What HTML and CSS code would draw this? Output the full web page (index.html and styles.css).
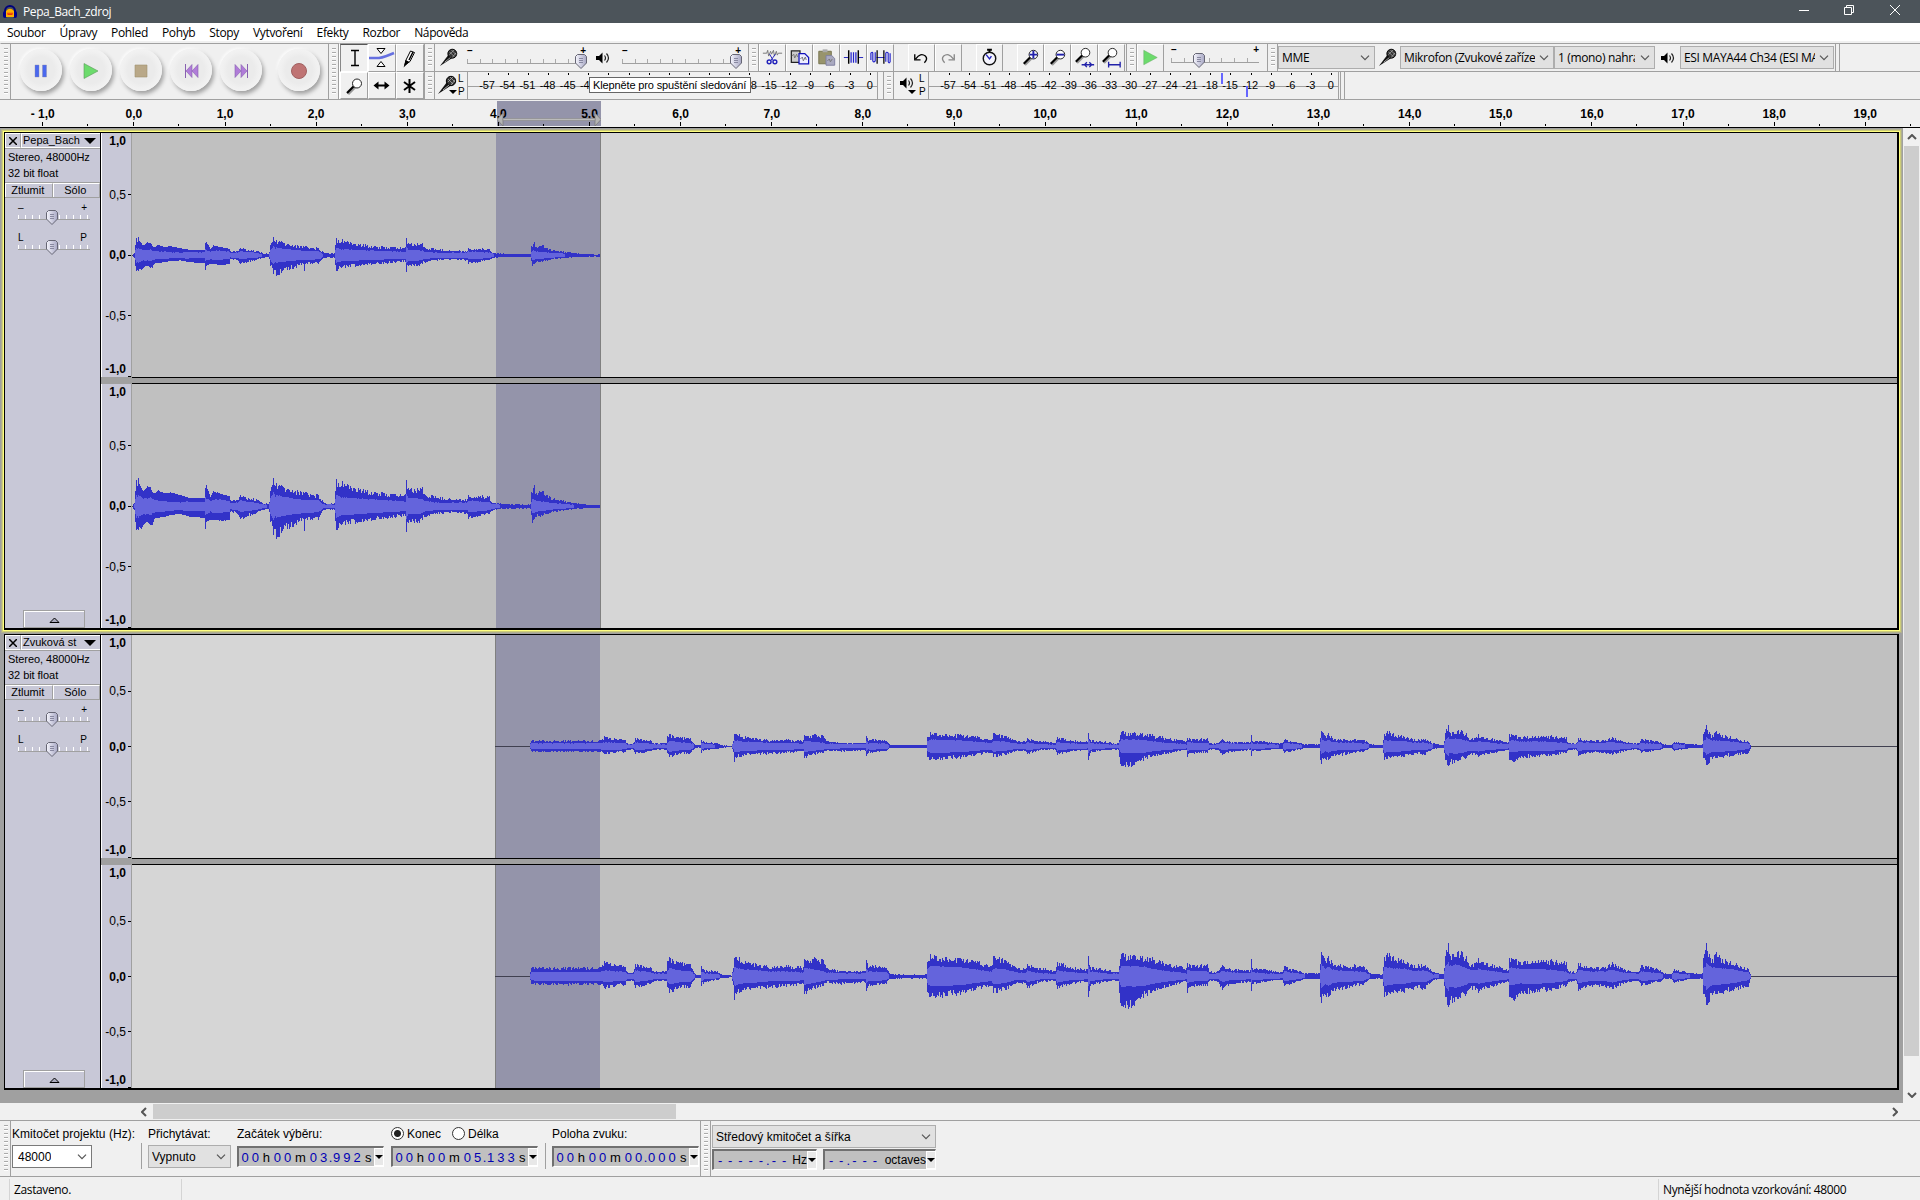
FILE: index.html
```html
<!DOCTYPE html>
<html lang="cs">
<head>
  <meta charset="UTF-8">
  <title>Pepa_Bach_zdroj</title>
  <link rel="stylesheet" href="styles.css">
</head>
<body>
  <svg class="defs" width="0" height="0">
    <defs>
      <linearGradient id="thumbFill" x1="0" x2="1">
        <stop offset="0" stop-color="#f4f4fc"/><stop offset="1" stop-color="#a8a8c4"/>
      </linearGradient>
      <symbol id="thumb" viewBox="0 0 12 15">
        <path d="M2.5 .5h7l2 2v6.500l-5.500 5.500L.5 9V2.500z" fill="url(#thumbFill)" stroke="#666674"/>
        <path d="M4 4.500h4M4 6.500h4M4 8.500h4" stroke="#8888a0"/>
      </symbol>
      <symbol id="mic" viewBox="0 0 20 20">
        <path d="M1 19L10 7l4 3.500z" fill="#111"/>
        <circle cx="14" cy="6" r="4.700" fill="#333" stroke="#000"/>
        <path d="M11 4l5 5M13 2l5 5M16 2l-5 5M18 5l-4 5" stroke="#bbb" stroke-width=".7"/>
        <path d="M6 15l6-5" stroke="#aaa"/>
      </symbol>
      <symbol id="speaker" viewBox="0 0 14 14">
        <path d="M0 5h3l3.500-3.500v11L3 9H0z" fill="#000"/>
        <path d="M8.500 4.500q2 2.500 0 5M10.500 2.500q4 4.500 0 9" fill="none" stroke="#222" stroke-width="1.200"/>
      </symbol>
      <symbol id="lens" viewBox="0 0 20 20">
        <path d="M3 17l7-7" stroke="#999" stroke-width="3"/>
        <path d="M2 16l7-7" stroke="#000" stroke-width="2.200"/>
        <circle cx="12" cy="6.500" r="4.500" fill="#fff" stroke="#222"/>
      </symbol>
      <symbol id="chev" viewBox="0 0 10 6"><path d="M1 .7l4 4 4-4" fill="none" stroke="#555" stroke-width="1.200"/></symbol>
    </defs>
  </svg>

  <header class="titlebar">
    <svg class="app-icon" viewBox="0 0 14 14">
      <path d="M2 9V6a5 5 0 0 1 10 0v3" fill="none" stroke="#00007c" stroke-width="2"/>
      <rect x="0" y="6" width="4" height="7" rx="2" fill="#00008c"/><rect x="10" y="6" width="4" height="7" rx="2" fill="#00008c"/>
      <path d="M3 12V6q4-4.500 8 0v6z" fill="#ffb000"/><path d="M4 9l1-2 1 2 1-2 1 2 1-2 1 2-1 1H5z" fill="#f03010"/>
    </svg>
    <span class="title">Pepa_Bach_zdroj</span>
    <svg class="win-buttons" viewBox="0 0 110 12" fill="none" stroke="#fff">
      <path d="M1 6.500h10M46.500 3.500h7v7h-7zM48.500 3.500v-2h7v7h-2M92 1l10 10M102 1L92 11"/>
    </svg>
  </header>

  <nav class="menu">
    <span>Soubor</span><span>Úpravy</span><span>Pohled</span><span>Pohyb</span><span>Stopy</span><span>Vytvoření</span><span>Efekty</span><span>Rozbor</span><span>Nápověda</span>
  </nav>

  <section class="toolbars">
    <div class="grip tall"></div>
    <div class="transport">
      <div class="round"><svg viewBox="0 0 16 16"><path d="M2 2h4v12H2zM9.500 2h4v12h-4z" fill="#4a68ee" stroke="#88a" stroke-width=".4"/></svg></div>
      <div class="round"><svg viewBox="0 0 16 16"><path d="M1 .5l14 7.500-14 7.500z" fill="#6cdb6c" stroke="#5a9a5a" stroke-width=".6"/></svg></div>
      <div class="round"><svg viewBox="0 0 16 16"><path d="M2 2h12v12H2z" fill="#b9a888" stroke="#a09070" stroke-width=".6"/></svg></div>
      <div class="round"><svg viewBox="0 0 16 16"><path d="M2.500 1v14" stroke="#8860b0"/><path d="M9 1.500v13L3 8zM15 1.500v13L9 8z" fill="#b07cd8" stroke="#8860b0" stroke-width=".6"/></svg></div>
      <div class="round"><svg viewBox="0 0 16 16"><path d="M14.500 1v14" stroke="#8860b0"/><path d="M8 1.500v13L14 8zM2 1.500v13L8 8z" fill="#b07cd8" stroke="#8860b0" stroke-width=".6"/></svg></div>
      <div class="round rec"><svg viewBox="0 0 16 16"><circle cx="8" cy="8" r="7.500" fill="#bf7474" stroke="#a06060"/></svg></div>
    </div>
    <div class="grip tall"></div>
    <div class="tools">
      <div class="tool down"><svg viewBox="0 0 26 26"><path d="M10 5.500h8M10 20.500h8M14 5v15" stroke="#000" stroke-width="1.400"/></svg></div>
      <div class="tool"><svg viewBox="0 0 26 26"><path d="M0 13h10q6-1 15-5" fill="none" stroke="#6670e0" stroke-width="2.500"/><path d="M8 3.500h8l-4 5zM8 21.500h8l-4-5z" fill="#fff" stroke="#000"/></svg></div>
      <div class="tool"><svg viewBox="0 0 26 26"><path d="M8 20l1-5 4.500-9 4 1.500-4.500 9z" fill="#fff" stroke="#000"/><path d="M8 20l1-4 2 1zM12 15l4-8" stroke="#000" stroke-width="1.500"/></svg></div>
      <div class="tool"><svg class="lens-big"><use href="#lens"/></svg></div>
      <div class="tool"><svg viewBox="0 0 26 26"><path d="M6 12.500h13" stroke="#000" stroke-width="2"/><path d="M4.500 12.500l5-4v8zM20.500 12.500l-5-4v8z"/></svg></div>
      <div class="tool"><svg viewBox="0 0 26 26"><path d="M12.500 6v14M7 9l11 8M18 9L7 17" stroke="#000" stroke-width="2"/></svg></div>
    </div>

    <div class="rows">
      <div class="row">
        <div class="grip"></div>
        <div class="mixer">
          <svg class="mic"><use href="#mic"/></svg>
          <div class="slider wide"><i>–</i><i>+</i><svg class="thumb"><use href="#thumb"/></svg></div>
          <svg class="speaker"><use href="#speaker"/></svg>
          <div class="slider wide"><i>–</i><i>+</i><svg class="thumb"><use href="#thumb"/></svg></div>
        </div>
        <div class="grip"></div>
        <div class="btns">
          <div class="btn"><svg viewBox="0 0 26 26"><path d="M3 8h4l1-3 1 6 2-5 1 3 2-4 1 6 2-5 1 4 1-2h4" fill="none" stroke="#777"/><path d="M16 9l-5 7M10 9l4 7" stroke="#22b"/><circle cx="9.500" cy="17" r="2" fill="none" stroke="#22b" stroke-width="1.500"/><circle cx="15.500" cy="17" r="2" fill="none" stroke="#22b" stroke-width="1.500"/></svg></div>
          <div class="btn"><svg viewBox="0 0 26 26"><path d="M4.500 5.500h9v12h-9z" fill="#ccc" stroke="#222" stroke-width="1.300"/><path d="M5 11l2-2 1 4 2-4 1 3" fill="none" stroke="#777"/><path d="M12.500 8.500h6l4 4v6.500h-10z" fill="#eef" stroke="#11b" stroke-width="1.300"/><path d="M14 14l2-2 1 4 2-4 1 3" fill="none" stroke="#777"/></svg></div>
          <div class="btn"><svg viewBox="0 0 26 26"><path d="M5 6h13v13H5z" fill="#98946c" stroke="#77754f"/><path d="M9 4h5v3H9z" fill="#aaa"/><path d="M12.500 10.500h6l3 3v7h-9z" fill="#aaaac0" stroke="#8080a0"/><path d="M14 16l2-2 1 3 2-3" fill="none" stroke="#777"/></svg></div>
          <div class="btn"><svg viewBox="0 0 26 26"><path d="M3 12.500h5M18 12.500h5" stroke="#22b"/><path d="M10.500 18V7M13 18V7M15.500 18V7" stroke="#22c" stroke-width="1.300"/><path d="M8 5v14M18 5v14" stroke="#000" stroke-width="1.500"/></svg></div>
          <div class="btn"><svg viewBox="0 0 26 26"><path d="M9 12.500h8" stroke="#22b"/><path d="M3 15V8q2-2 2 0v8q1 2 2.500 0V7M18.500 17V8q1-2 2.500 0v9q1 2 2 0V8" fill="none" stroke="#22c" stroke-width="1.200"/><path d="M9.500 5v14M16.500 5v14" stroke="#000" stroke-width="1.300"/></svg></div>
          <div class="btn gap"><svg viewBox="0 0 26 26"><path d="M6 9v6h6M7 14q5-7 10-3 3 3-1 7" fill="none" stroke="#000" stroke-width="1.400"/></svg></div>
          <div class="btn"><svg viewBox="0 0 26 26"><path d="M19 9v6h-6M18 14q-5-7-10-3-3 3 1 7" fill="none" stroke="#888" stroke-width="1.400"/></svg></div>
          <div class="btn gap"><svg viewBox="0 0 26 26"><path d="M10.500 4.500h5M13 4.500v3" stroke="#000" stroke-width="2"/><circle cx="13" cy="13.500" r="6.500" fill="#f4f4fc" stroke="#111" stroke-width="1.500"/><path d="M9.500 9.500L13 14l2-3" fill="none" stroke="#22b" stroke-width="1.400"/></svg></div>
          <div class="btn gap"><svg viewBox="0 0 26 26"><use href="#lens" x="4" y="3" width="20" height="20"/><path d="M12 9.500h8M16 5.500v8" stroke="#22a" stroke-width="2"/></svg></div>
          <div class="btn"><svg viewBox="0 0 26 26"><use href="#lens" x="4" y="3" width="20" height="20"/><path d="M12 9.500h8" stroke="#22a" stroke-width="2"/></svg></div>
          <div class="btn"><svg viewBox="0 0 26 26"><use href="#lens" x="2" y="1" width="20" height="20"/><path d="M10 20h13M15.500 17.500l-2.500 2.500 2.500 2.500M18 17.500l2.500 2.500-2.500 2.500" fill="none" stroke="#22a" stroke-width="1.400"/></svg></div>
          <div class="btn"><svg viewBox="0 0 26 26"><use href="#lens" x="2" y="1" width="20" height="20"/><path d="M10 20h12M10 17v6M22 17v6" fill="none" stroke="#22a" stroke-width="1.400"/></svg></div>
        </div>
        <div class="grip"></div>
        <div class="btn playspeed"><svg viewBox="0 0 26 26"><path d="M6 5l14 7.500L6 20z" fill="#6cdb6c" stroke="#6a6" stroke-width=".5"/></svg></div>
        <div class="slider speed"><i>–</i><i>+</i><svg class="thumb"><use href="#thumb"/></svg></div>
        <div class="grip"></div>
        <div class="devices">
          <div class="combo host"><span>MME</span><svg><use href="#chev"/></svg></div>
          <svg class="mic"><use href="#mic"/></svg>
          <div class="combo"><span>Mikrofon (Zvukové zařízení)</span><svg><use href="#chev"/></svg></div>
          <div class="combo chan"><span>1 (mono) nahrávací</span><svg><use href="#chev"/></svg></div>
          <svg class="speaker"><use href="#speaker"/></svg>
          <div class="combo"><span>ESI MAYA44 Ch34 (ESI MAYA)</span><svg><use href="#chev"/></svg></div>
        </div>
      </div>
      <div class="row">
        <div class="grip"></div>
        <div class="meterbar">
          <svg class="mic"><use href="#mic"/></svg><b class="drop"></b>
          <div class="lp"><span>L</span><span>P</span></div>
          <div class="meter"></div>
          <div class="tooltip">Klepněte pro spuštění sledování</div>
        </div>
        <div class="grip"></div>
        <div class="meterbar play">
          <svg class="speaker"><use href="#speaker"/></svg><b class="drop"></b>
          <div class="lp"><span>L</span><span>P</span></div>
          <div class="meter"></div>
          <b class="peak left"></b><b class="peak right"></b>
        </div>
      </div>
    </div>
  </section>

  <section class="timeline">
    <div class="range"></div>
    <div class="ticks" id="ticks"></div>
    <svg class="handles" viewBox="0 0 104 13"><path d="M0 6.500L6 0v13zM104 6.500L98 0v13z" fill="#b4b4b4" stroke="#777" stroke-width=".7"/><path d="M6 5.500h92v2H6z" fill="#bbb" stroke="#888" stroke-width=".6"/></svg>
  </section>

  <main class="workspace">
    <div class="tracks">
      <article class="track focused" data-name="Pepa_Bach" data-wave="source"></article>
      <article class="track second" data-name="Zvuková st" data-wave="target"></article>
    </div>
    <div class="vscroll"><svg viewBox="0 0 10 6"><path d="M1 5l4-4 4 4" fill="none" stroke="#555" stroke-width="2"/></svg><div class="bar"></div><svg viewBox="0 0 10 6"><path d="M1 1l4 4 4-4" fill="none" stroke="#555" stroke-width="2"/></svg></div>
  </main>

  <div class="hscroll"><svg viewBox="0 0 6 10"><path d="M5 1L1 5l4 4" fill="none" stroke="#555" stroke-width="2"/></svg><div class="bar"></div><svg viewBox="0 0 6 10"><path d="M1 1l4 4-4 4" fill="none" stroke="#555" stroke-width="2"/></svg></div>

  <section class="selection">
    <div class="grip tall"></div>
    <div class="field rate"><label>Kmitočet projektu (Hz):</label><div class="combo white"><span>48000</span><svg><use href="#chev"/></svg></div></div>
    <div class="rule"></div>
    <div class="field snap"><label>Přichytávat:</label><div class="combo"><span>Vypnuto</span><svg><use href="#chev"/></svg></div></div>
    <div class="field start"><label>Začátek výběru:</label><div class="time" data-time="00h00m03.992s"></div></div>
    <div class="field end"><div class="radios"><i class="radio on"></i>Konec<i class="radio"></i>Délka</div><div class="time" data-time="00h00m05.133s"></div></div>
    <div class="rule"></div>
    <div class="field pos"><label>Poloha zvuku:</label><div class="time" data-time="00h00m00.000s"></div></div>
    <div class="grip tall"></div>
    <div class="spectral">
      <div class="combo"><span>Středový kmitočet a šířka</span><svg><use href="#chev"/></svg></div>
      <div class="pair">
        <div class="time hz" data-time="-----.--" data-unit="Hz"></div>
        <div class="time oct" data-time="--.---" data-unit="octaves"></div>
      </div>
    </div>
  </section>

  <footer class="status"><span>Zastaveno.</span><span></span><span>Nynější hodnota vzorkování: 48000</span></footer>
  <script src="script.js"></script>
</body>
</html>
```
FILE: styles.css
```css
* { box-sizing: border-box; }

body {
  margin: 0;
  width: 1920px;
  height: 1200px;
  overflow: hidden;
  background: #f0f0f0;
  color: #000;
  font: 12px "Liberation Sans", Arial, sans-serif;
  display: flex;
  flex-direction: column;
}

svg { display: block; flex: none; }
.defs { position: absolute; }
i { font-style: normal; }

/* title + menu */
.titlebar {
  height: 23px;
  flex: none;
  background: #4c545a;
  color: #fff;
  display: flex;
  align-items: center;
  padding-left: 3px;
  font-family: "Open Sans", sans-serif;
}
.app-icon { width: 14px; height: 14px; }
.title { margin-left: 6px; letter-spacing: -0.4px; }
.win-buttons { width: 110px; height: 12px; margin: 0 12px 3px auto; }

.menu {
  height: 18px;
  flex: none;
  background: #fff;
  display: flex;
  gap: 14px;
  padding: 1px 0 0 7px;
  line-height: 18px;
  font-family: "Open Sans", sans-serif;
  letter-spacing: -0.35px;
}

/* toolbars */
.toolbars {
  height: 59px;
  flex: none;
  padding-top: 2px;
  display: flex;
  border-bottom: 1px solid #a0a0a0;
}
.toolbars > * { border-top: 1px solid #a0a0a0; }

.grip {
  width: 11px;
  flex: none;
  border-right: 1px solid #a0a0a0;
  border-left: 1px solid #a0a0a0;
  background: repeating-linear-gradient(#aaa 0 1px, #fff 1px 2px, #f0f0f0 2px 4px) 3px 4px / 4px calc(100% - 7px) no-repeat #f0f0f0;
}
.toolbars > .grip:first-child,
.selection > .grip:first-child { border-left-color: #f0f0f0; }

.transport { width: 317px; display: flex; padding: 5px 0 0 9px; gap: 8px; }
.round {
  width: 42px;
  height: 42px;
  flex: none;
  border-radius: 50%;
  background: radial-gradient(#ebebeb 45%, #f0f0f0 60%, #f8f8f8);
  box-shadow: 2px 3px 4px #a0a0a0, -1px -1px 3px #fff;
  display: flex;
  align-items: center;
  justify-content: center;
}
.round svg { width: 16px; height: 16px; margin-top: 1px; }
.round.rec { margin-left: 8px; }

.tools {
  width: 85px;
  display: grid;
  grid-template-columns: repeat(3, 28px);
  grid-template-rows: 28px 27px;
  border-left: 1px solid #fff;
}
.tool {
  border: 1px solid #fff;
  border-right-color: #a0a0a0;
  border-bottom-color: #a0a0a0;
}
.tool svg { width: 26px; height: 26px; }
.tool .lens-big { width: 20px; height: 20px; margin: 4px; }
.tool.down { border-color: #555 #fff #fff #888; }

.rows { flex: 1; display: flex; flex-direction: column; }
.row { height: 28px; display: flex; border-bottom: 1px solid #a0a0a0; }
.row + .row { height: 27px; border: 0; }

.mixer { width: 313px; display: flex; padding-left: 4px; align-items: center; }
.mic { width: 19px; height: 19px; }
.speaker { width: 14px; height: 14px; }

.slider {
  position: relative;
  height: 24px;
  width: 115px;
  margin-left: 9px;
  display: flex;
  justify-content: space-between;
  font-size: 10px;
  line-height: 10px;
  font-weight: bold;
  background:
    linear-gradient(#a0a0a0, #a0a0a0) 0 17px / 100% 1px no-repeat,
    repeating-linear-gradient(90deg, #aaa 0 1px, transparent 1px 12.6px) 0 13px / 100% 4px no-repeat;
}
.mixer .slider { width: 119px; }
.mixer .speaker { margin: 0 0 0 10px; }
.mixer .slider:last-child { margin-left: 12px; }
.thumb { position: absolute; width: 12px; height: 15px; top: 8px; right: -1px; }
.slider.speed { width: 88px; margin: 1px 8px 0 7px; }
.slider.speed .thumb { right: 54px; }

.btns { width: 367px; display: flex; }
.btn {
  width: 27px;
  height: 27px;
  flex: none;
  border-left: 1px solid #fff;
  border-top: 1px solid #fff;
  border-right: 1px solid #a0a0a0;
}
.btn svg { width: 25px; height: 26px; }
.btn.gap { margin-left: 14px; }

.devices {
  width: 558px;
  display: flex;
  align-items: center;
  border-right: 1px solid #a0a0a0;
  box-shadow: 3px 0 0 #f0f0f0, 4px 0 0 #a0a0a0;
}
.devices .mic { margin: 0 3px 0 3px; }
.devices .speaker { margin: 0 5px 0 6px; }

.combo {
  width: 154px;
  height: 23px;
  flex: none;
  background: #e1e1e1;
  border: 1px solid #adadad;
  display: flex;
  align-items: center;
  justify-content: space-between;
  padding: 0 4px 0 3px;
  font-family: "Open Sans", sans-serif;
  letter-spacing: -0.35px;
}
.combo span { width: 131px; overflow: hidden; white-space: nowrap; }
.combo svg { width: 10px; height: 6px; }
.combo.host { width: 97px; }
.combo.host span, .combo.chan span { width: 77px; }
.combo.chan { width: 101px; }
.combo.white { background: #fff; border-color: #7a7a7a; }

/* level meters */
.meterbar { position: relative; width: 448px; display: flex; padding-left: 2px; }
.meterbar .mic { margin-top: 3px; width: 20px; height: 20px; }
.drop {
  position: absolute;
  left: 14px;
  top: 18px;
  border: 4px solid transparent;
  border-top-color: #000;
  border-bottom: 0;
}
.lp { width: 9px; margin-left: 1px; font-size: 10px; line-height: 13px; display: flex; flex-direction: column; }
.meter {
  height: 27px;
  width: 411px;
  border-left: 1px solid #a0a0a0;
  border-right: 1px solid #a0a0a0;
  display: flex;
  padding-left: 9px;
  line-height: 27px;
  font-size: 11px;
  background: linear-gradient(#a0a0a0, #a0a0a0) 0 14px / 100% 1px no-repeat;
}
.meter span {
  flex: 0 0 20.15px;
  display: flex;
  justify-content: center;
  letter-spacing: -0.1px;
  background: linear-gradient(#000, #000) 55% 1px / 1px 2px no-repeat;
}
.meterbar.play { padding-left: 5px; width: 447px; border-right: 1px solid #a0a0a0; box-shadow: 3px 0 0 #f0f0f0, 4px 0 0 #a0a0a0; }
.play .speaker { margin: 4px 0 0 1px; }
.play .lp { margin-left: 5px; }
.play .drop { left: 14px; }
.tooltip {
  position: absolute;
  left: 154px;
  top: 5px;
  width: 162px;
  height: 16px;
  background: #fff;
  border: 1px solid #666;
  font-size: 11px;
  line-height: 14px;
  padding-left: 3px;
  letter-spacing: -0.13px;
  white-space: nowrap;
}
.peak { position: absolute; width: 2px; height: 11px; background: #6666ff; top: 1px; left: 327px; }
.peak.right { top: 14px; left: 352px; }

/* time ruler */
.timeline {
  position: relative;
  height: 28px;
  flex: none;
  border-bottom: 1px solid #000;
  overflow: hidden;
}
.range { position: absolute; left: 497px; top: 1px; width: 104px; height: 25px; background: #9494aa; }
.handles { position: absolute; left: 497px; top: 13px; width: 104px; height: 13px; }
.ticks { position: relative; display: flex; margin-left: -2.8px; height: 26px; }
.ticks span {
  flex: 0 0 91.14px;
  text-align: center;
  font: bold 12px/29px "Liberation Sans", sans-serif;
  background:
    linear-gradient(#000, #000) 50% 100% / 1px 4px no-repeat,
    linear-gradient(#000, #000) 100% 100% / 1px 2px no-repeat;
}

/* tracks */
.workspace { height: 975px; flex: none; display: flex; background: #a0a0a0; }
.tracks { width: 1903px; padding: 4px 0 0 4px; }
.track {
  width: 1895px;
  height: 498px;
  border: 1px solid #000;
  border-right-width: 2px;
  border-bottom-width: 2px;
  display: flex;
}
.track.focused { box-shadow: 0 0 0 1px #ffff80, 0 0 0 2px #cccc78, 0 0 0 3px #b0b090; }
.track.second { height: 456px; margin-top: 4px; }

.panel {
  width: 96px;
  flex: none;
  background: #c8c8d7;
  border-right: 1px solid #000;
  display: flex;
  flex-direction: column;
  font-size: 11px;
}
.panel .head { display: flex; height: 16px; border-bottom: 1px solid #a0a0a0; }
.head .close {
  width: 16px;
  display: flex;
  align-items: center;
  justify-content: center;
  border: 1px solid #fff;
  border-right-color: #a0a0a0;
}
.close svg { width: 8px; height: 8px; }
.head .name {
  flex: 1;
  border: 1px solid #fff;
  border-right: 0;
  line-height: 12px;
  padding-left: 1px;
  display: flex;
  justify-content: space-between;
}
.name b { border: 6px solid transparent; border-top-color: #000; border-bottom: 0; margin: 4px 4px 0 0; }
.panel .info { height: 33px; padding-left: 3px; line-height: 16px; letter-spacing: -0.05px; }
.mutes { display: flex; height: 16px; border-bottom: 1px solid #a0a0a0; border-top: 1px solid #a0a0a0; }
.mutes span { flex: 1; text-align: center; line-height: 13px; border: 1px solid #fff; border-right-color: #a0a0a0; border-bottom: 0; padding-right: 2px; }
.panel .slider {
  width: 72px;
  height: 20px;
  margin: 5px 0 3px 13px;
  padding: 0 3px 0 0;
  font-weight: normal;
  background:
    linear-gradient(#a0a0a0, #a0a0a0) 0 16px / 100% 1px no-repeat,
    repeating-linear-gradient(90deg, #fff 0 1px, transparent 1px 6.9px) 0 12px / 100% 4px no-repeat;
}
.panel .slider + .slider { margin-top: 7px; }
.panel .thumb { top: 7px; left: 28px; }
.collapse {
  width: 62px;
  height: 18px;
  margin: auto 0 0 18px;
  border: 1px solid #a0a0a0;
  box-shadow: inset 1px 1px 0 #fff;
  padding: 6px 0 0 25px;
}
.collapse svg { width: 11px; height: 7px; }

.channels { flex: 1; display: flex; flex-direction: column; justify-content: space-between; }
.channel { display: flex; height: 244px; }
.second .channel { height: 223px; }
.vruler {
  width: 31px;
  background: #c8c8d7;
  border-left: 1px solid #fff;
  border-right: 1px solid #a0a0a0;
  display: flex;
  flex-direction: column;
}
.vruler span {
  flex: 1;
  display: flex;
  align-items: center;
  justify-content: flex-end;
  padding-right: 5px;
  background: linear-gradient(#000, #000) 100% 50% / 3px 1px no-repeat;
}
.vruler span:nth-child(odd) { flex: 0 0 14px; font-weight: bold; }
.vruler span:first-child { background: none; padding-top: 1px; }
.vruler span:last-child { background-position: 100% 100%; padding-bottom: 1px; }
.vruler span:nth-child(3) { flex-basis: 28px; }
.divider { flex: 1; margin-left: 31px; border-top: 1px solid #000; border-bottom: 1px solid #000; background: #a0a0a0; }
canvas { display: block; }

/* scrollbars */
.vscroll {
  width: 17px;
  display: flex;
  flex-direction: column;
  align-items: center;
  background: #f0f0f0;
  padding: 6px 0 5px;
}
.vscroll svg { width: 10px; height: 6px; }
.vscroll .bar { width: 15px; height: 910px; margin: 6px 0 auto; background: #cdcdcd; }
.hscroll { height: 17px; flex: none; display: flex; align-items: center; padding: 0 22px 0 141px; }
.hscroll svg { width: 6px; height: 10px; }
.hscroll .bar { width: 523px; height: 15px; margin: 0 auto 0 6px; background: #cdcdcd; }

/* selection bar */
.selection {
  height: 57px;
  flex: none;
  border-top: 1px solid #a0a0a0;
  border-bottom: 1px solid #a0a0a0;
  display: flex;
}
.field { display: flex; flex-direction: column; }
.field label, .radios { height: 24px; line-height: 26px; white-space: nowrap; }
.field .combo, .spectral .combo { font-family: inherit; letter-spacing: 0; }
.field.rate { width: 130px; padding-left: 1px; letter-spacing: 0.05px; }
.rate .combo { width: 80px; padding-left: 5px; }
.combo.white span, .snap .combo span, .spectral .combo span { width: auto; }
.snap .combo { width: 83px; }
.rule { width: 1px; height: 26px; margin-top: 22px; background: #a0a0a0; }
.field.snap { width: 95px; padding-left: 6px; }
.field.start { width: 154px; }
.field.end { width: 154px; }
.field.pos { width: 154px; padding-left: 6px; }
.radios { display: flex; align-items: center; padding-top: 1px; }
.radio {
  width: 13px;
  height: 13px;
  border: 1px solid #333;
  border-radius: 50%;
  background: #fff;
  margin-right: 3px;
}
.radio.on { background: radial-gradient(#222 0 3px, #fff 4px); }
.radio:not(.on) { margin-left: 11px; }

.time {
  width: 147px;
  height: 21px;
  margin-top: 1px;
  background: #c0c0c0;
  border: 2px solid #707070;
  border-right: 1px solid #fff;
  border-bottom: 1px solid #fff;
  display: flex;
  align-items: center;
  padding-left: 1px;
}
.time span { width: 10.2px; text-align: center; color: #0000b4; flex: none; font-size: 13px; }
.time .h, .time .s { width: 12px; color: #000; }
.time .m { width: 15.5px; color: #000; }
.time .dot { width: 3px; }
.time em { font-style: normal; margin-left: auto; }
.time b {
  width: 9px;
  height: 18px;
  flex: none;
  margin-left: auto;
  background: #e8e8e8;
  border: 1px solid #fff;
  border-right: 0;
  display: flex;
  align-items: center;
  justify-content: center;
}
.time em + b { margin-left: 0; }
.time b::after { content: ""; border: 4px solid transparent; border-top: 4px solid #000; border-bottom: 0; }

.spectral { padding: 4px 0 0 1px; }
.spectral .combo { width: 224px; }
.pair { display: flex; gap: 6px; margin-top: 1px; }
.time.hz { width: 105px; margin-top: 0; }
.time.oct { width: 113px; margin-top: 0; }

/* status bar */
.status {
  flex: 1;
  display: flex;
  padding: 2px 0 0 9px;
  border-bottom: 2px solid #3c4246;
  font-family: "Open Sans", sans-serif;
  letter-spacing: -0.37px;
}
.status span { border-left: 1px solid #d4d4d4; padding-left: 4px; line-height: 21px; }
.status span:first-child { width: 172px; }
.status span:nth-child(2) { width: 1477px; }
```
FILE: script.js
```js
const SEL = [496, 600];
const LEFT = 132; // page x of the first waveform column

// envelope points: x, peak above, peak below
const waves = {
  source: {
    clip: [132, 601],
    points: [
      [132, .5, .5], [134, 3, 3], [135, 15, 15], [136, 26, 23], [137, 20, 22], [138, 28, 23], [139, 22, 20], [141, 18, 22], [143, 15, 18],
      [147, 20, 15], [150, 19, 18], [152, 14, 18], [154, 13, 12], [158, 16, 11], [164, 13, 10], [170, 14, 8], [180, 11, 7], [190, 8, 10],
      [204, 8, 11], [205, 18, 22], [206, 21, 15], [208, 15, 14], [210, 9, 13], [213, 15, 13], [222, 12, 14], [229, 10, 13], [230, 6, 5],
      [237, 6, 7], [240, 11, 12], [248, 8, 9], [256, 7, 6], [262, 3, 3], [268, 2, 2], [269, 4, 5], [270, 15, 15], [273, 28, 28],
      [275, 20, 22], [276, 23, 32], [282, 20, 24], [292, 16, 20], [303, 14, 12], [304, 13, 24], [305, 14, 12], [318, 11, 13], [322, 6, 4],
      [324, 3, 2.500], [334, 3, 2.500], [335, 15, 14], [336, 27, 23], [342, 25, 17], [350, 20, 17], [360, 17, 15], [375, 14, 13],
      [390, 12, 11], [405, 12, 9], [406, 26, 25], [408, 18, 16], [417, 18, 16], [422, 19, 13], [424, 12, 10], [435, 10, 7], [450, 7, 6],
      [467, 7, 7], [468, 11, 12], [480, 10, 9], [489, 10, 7], [491, 4, 4], [500, 2.500, 2], [522, 1.500, 1.500], [530, 1.500, 1.500],
      [531, 14, 8], [532, 13, 16], [534, 21, 12], [536, 13, 10], [542, 15, 9], [550, 9, 6], [560, 6, 4], [575, 3, 2], [590, 1, 1], [600, 1, 1]
    ]
  },
  target: {
    clip: [495, 1897],
    points: [
      [495, .5, .5], [529, .5, .5], [531, 8, 7], [535, 8.500, 8], [600, 9, 8], [604, 15, 11], [625, 9, 8], [627, 4, 4], [633, 4, 4],
      [635, 12, 11], [650, 9, 7], [653, 5, 5], [666, 5, 4], [667, 15, 10], [669, 19, 16], [672, 17, 15], [680, 14, 11], [690, 12, 10],
      [693, 5, 4], [696, 1, 1], [700, 1, 1], [701, 10, 9], [704, 6, 5], [717, 5, 3], [722, 1, 1], [731, .5, .5], [733, 8, 8], [734, 18, 23],
      [736, 19, 17], [745, 15, 13], [760, 11, 12], [772, 9, 11], [790, 10, 9], [803, 9, 7], [804, 17, 17], [815, 18, 12], [823, 16, 9],
      [826, 8, 6], [840, 5, 7], [865, 5, 6], [866, 16, 14], [868, 8, 9], [872, 11, 9], [886, 8, 7], [889, 3, 2], [895, 1.500, 1.500],
      [926, 1.500, 1.500], [927, 14, 15], [930, 22, 20], [935, 20, 21], [945, 19, 19], [960, 18, 18], [975, 15, 13], [991, 10, 9],
      [993, 20, 16], [1005, 16, 13], [1015, 9, 7], [1025, 7, 6], [1027, 12, 11], [1040, 8, 5], [1055, 5, 4], [1057, 14, 12], [1070, 9, 7],
      [1087, 7, 5], [1088, 20, 20], [1090, 9, 9], [1100, 8, 6], [1110, 6, 4], [1118, 4, 4], [1120, 17, 26], [1121, 22, 29], [1128, 20, 32],
      [1133, 21, 28], [1140, 20, 22], [1150, 18, 16], [1160, 15, 12], [1170, 12, 9], [1186, 8, 5], [1187, 13, 16], [1190, 11, 10],
      [1207, 12, 9], [1209, 4, 4], [1218, 5, 5], [1222, 11, 13], [1230, 7, 7], [1250, 6, 5], [1251, 17, 14], [1252, 8, 7], [1265, 7, 5],
      [1282, 4, 3], [1284, 10, 9], [1300, 5, 4], [1305, 2.500, 2], [1319, 3, 2], [1320, 12, 20], [1321, 24, 26], [1325, 15, 18],
      [1328, 20, 20], [1332, 13, 14], [1345, 10, 12], [1355, 11, 9], [1363, 10, 8], [1370, 3, 2], [1382, 1.500, 1.500], [1384, 19, 20],
      [1387, 23, 18], [1393, 20, 16], [1403, 16, 15], [1412, 11, 12], [1425, 11, 12], [1433, 4, 3], [1443, 1.500, 1.500], [1445, 20, 20],
      [1448, 33, 30], [1449, 22, 28], [1452, 22, 26], [1458, 25, 22], [1466, 20, 17], [1468, 13, 13], [1477, 13, 12], [1478, 18, 16],
      [1481, 14, 13], [1500, 9, 7], [1508, 6, 5], [1509, 18, 20], [1513, 17, 23], [1520, 14, 17], [1535, 15, 15], [1550, 16, 13],
      [1566, 14, 9], [1568, 5, 5], [1576, 4, 4], [1578, 13, 14], [1590, 9, 9], [1605, 9, 10], [1612, 14, 12], [1625, 6, 6], [1638, 4, 4],
      [1641, 11, 9], [1660, 6, 5], [1663, 2.500, 2], [1671, 2, 2], [1674, 7, 6], [1690, 3, 2], [1702, 2.500, 2], [1703, 18, 17],
      [1705, 26, 20], [1706, 33, 28], [1707, 25, 28], [1709, 22, 25], [1712, 17, 18], [1716, 24, 17], [1722, 17, 16], [1730, 15, 14],
      [1740, 10, 12], [1748, 7, 10], [1749, 4, 6], [1751, .5, .5], [1897, .5, .5]
    ]
  }
};

function noise(n) {
  const v = Math.sin(n * 12.9898) * 43758.5453;
  return v - Math.floor(v);
}

function envelope(points, x) {
  let i = 1;
  while (i < points.length - 1 && points[i][0] < x) i++;
  const a = points[i - 1], b = points[i];
  const t = Math.min(1, (x - a[0]) / (b[0] - a[0]));
  return [a[1] + (b[1] - a[1]) * t, a[2] + (b[2] - a[2]) * t, t === 1];
}

function drawWave(canvas, wave, channel) {
  const ctx = canvas.getContext('2d');
  const h = canvas.height, mid = Math.floor(h / 2);
  const fill = (color, x1, x2, y1, y2) => {
    ctx.fillStyle = color;
    ctx.fillRect(x1 - LEFT, y1, x2 - x1, y2 - y1);
  };
  fill('#d6d6d6', LEFT, 1897, 0, h);
  fill('#c0c0c0', wave.clip[0], wave.clip[1], 0, h);
  fill('#9494aa', SEL[0], SEL[1], 0, h);
  const edge = wave === waves.target ? 495 : 600;
  fill('#808080', edge, edge + 1, 0, h);

  const scale = channel === 0 ? 0.64 : 1;
  const points = wave.points;
  for (let x = points[0][0]; x < points[points.length - 1][0]; x++) {
    const [up, down, exact] = envelope(points, x);
    if (up <= 0.5) {
      fill('#404050', x, x + 1, mid, mid + 1);
      continue;
    }
    // smooth head of the first clip, rougher everywhere else; listed points keep their height
    const smooth = wave === waves.source && x < 230;
    const jitter = n => exact ? 1 : smooth ? 1 - 0.04 * noise(n) : 1.08 - 0.38 * noise(n);
    const top = Math.round(up * scale * jitter(x));
    const bottom = Math.round(down * scale * jitter(x + 7000));
    const rms = Math.min(up, down) * scale * 0.46;
    fill('#3232c8', x, x + 1, mid - top, mid + bottom + 1);
    if (rms > 1) fill('#6464dc', x, x + 1, mid - Math.round(rms + noise(x + 99) * 0.8), mid + Math.round(rms) + 1);
  }
}

document.querySelectorAll('.track').forEach(track => {
  const wave = waves[track.dataset.wave];
  const h = track.classList.contains('second') ? 223 : 244;
  const channel = `
    <div class="channel">
      <div class="vruler"><span>1,0</span><span>0,5</span><span>0,0</span><span>-0,5</span><span>-1,0</span></div>
      <canvas width="1765" height="${h}"></canvas>
    </div>`;
  track.innerHTML = `
    <div class="panel">
      <div class="head">
        <div class="close"><svg viewBox="0 0 8 8"><path d="M0 0l8 8M8 0L0 8" stroke="#000" stroke-width="1.500"/></svg></div>
        <div class="name">${track.dataset.name}<b></b></div>
      </div>
      <div class="info">Stereo, 48000Hz<br>32 bit float</div>
      <div class="mutes"><span>Ztlumit</span><span>Sólo</span></div>
      <div class="slider"><i>–</i><i>+</i><svg class="thumb"><use href="#thumb"/></svg></div>
      <div class="slider"><i>L</i><i>P</i><svg class="thumb"><use href="#thumb"/></svg></div>
      <div class="collapse"><svg viewBox="0 0 11 7"><path d="M1 5.500L5.500 1 10 5.500z" fill="#aaaabc" stroke="#000"/></svg></div>
    </div>
    <div class="channels">${channel}<div class="divider"></div>${channel}</div>`;
  track.querySelectorAll('canvas').forEach((c, i) => drawWave(c, wave, i));
});

let ticks = '';
for (let s = -1; s <= 20; s++) ticks += `<span>${s < 0 ? '- 1' : s},0</span>`;
document.getElementById('ticks').innerHTML = ticks;

document.querySelectorAll('.meter').forEach(meter => {
  for (let db = -57; db <= 0; db += 3) meter.innerHTML += `<span>${db}</span>`;
});

document.querySelectorAll('.time').forEach(el => {
  let html = '';
  for (const c of el.dataset.time) {
    const cls = c === '.' ? 'dot' : /[hms]/.test(c) ? c : '';
    html += `<span class="${cls}">${c}</span>`;
  }
  if (el.dataset.unit) html += `<em>${el.dataset.unit}</em>`;
  el.innerHTML = html + '<b></b>';
});
```
